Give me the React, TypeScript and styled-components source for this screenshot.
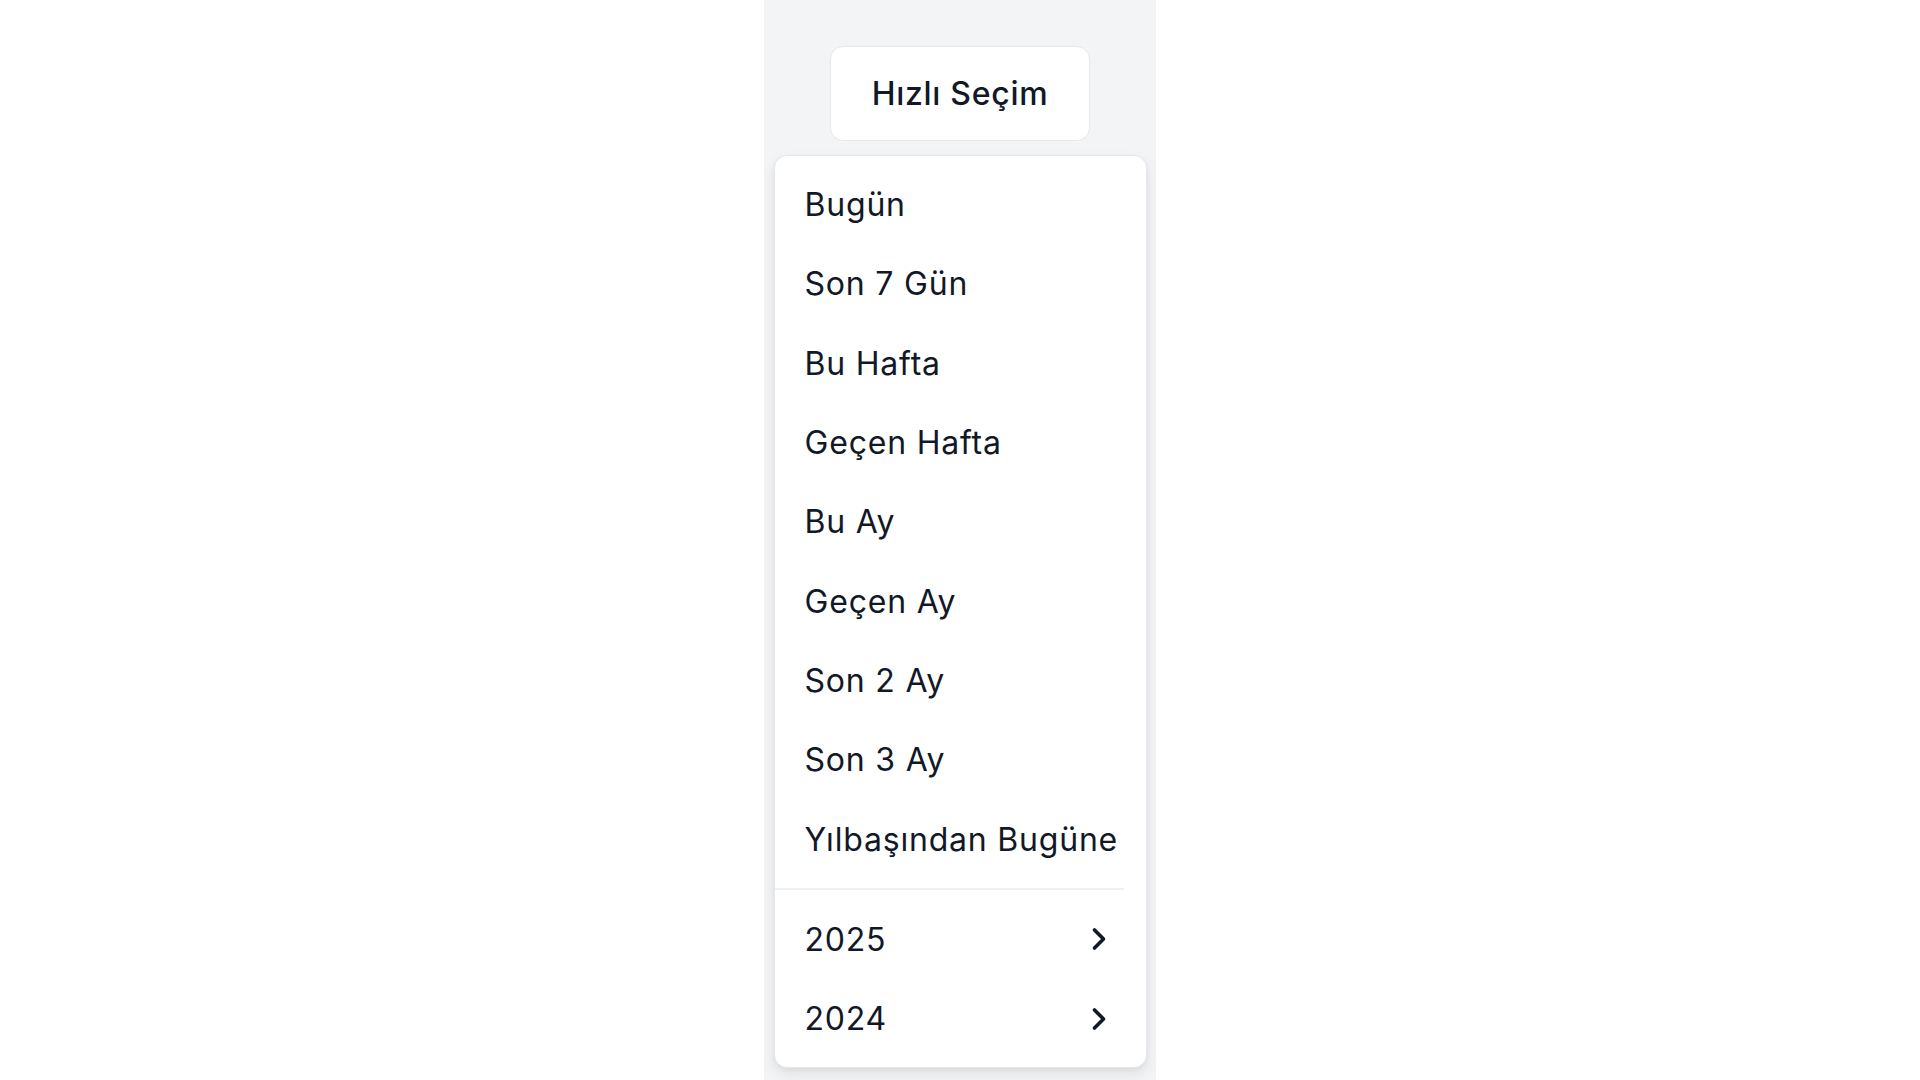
import React from 'react'
import styled, { createGlobalStyle } from 'styled-components';

const GlobalStyle = createGlobalStyle`
    html, body {
        margin: 0;
        padding: 0;
        background: #ffffff;
        font-family: Inter, "Noto Sans", "Liberation Sans", sans-serif;
        color: #111827;
    }
`;

const Page = styled.div`
    display: flex;
    justify-content: center;
    min-height: 1080px;
`;

const Panel = styled.div`
    width: 392px;
    background-color: #f3f4f6;
    display: flex;
    flex-direction: column;
    align-items: center;
    padding-top: 46px;
    box-sizing: border-box;
    height: 1080px;
`;

const Trigger = styled.button`
    width: 260px;
    height: 95px;
    background: #ffffff;
    border: 1.5px solid #e5e7eb;
    border-radius: 13px;
    font-family: inherit;
    font-size: 32px;
    letter-spacing: 0.7px;
    font-weight: 500;
    color: #111827;
    cursor: pointer;
    padding: 0;
`;

const Menu = styled.div`
    margin-top: 14px;
    width: 373px;
    box-sizing: border-box;
    background: #ffffff;
    border: 1.5px solid #e5e7eb;
    border-radius: 13px;
    box-shadow: 0 6px 14px rgba(0, 0, 0, 0.08), 0 2px 4px rgba(0, 0, 0, 0.04);
    padding: 9px 22px 9px 0;
    display: flex;
    flex-direction: column;
`;

const Item = styled.div`
    height: 79.3px;
    display: flex;
    align-items: center;
    justify-content: space-between;
    padding: 0 7px 0 30px;
    font-size: 32px;
    letter-spacing: 0.8px;
    font-weight: 400;
    color: #111827;
    cursor: default;
    white-space: nowrap;
`;

const Separator = styled.div`
    height: 1.5px;
    background: #eef0f3;
    margin: 9.5px 0 10px;
`;

const Chevron = () => (
    <svg width="36" height="36" viewBox="0 0 24 24" fill="none" stroke="#111827" strokeWidth="2.4" strokeLinecap="round" strokeLinejoin="round">
        <path d="m9 18 6-6-6-6" />
    </svg>
);

const presets = [
    'Bugün',
    'Son 7 Gün',
    'Bu Hafta',
    'Geçen Hafta',
    'Bu Ay',
    'Geçen Ay',
    'Son 2 Ay',
    'Son 3 Ay',
    'Yılbaşından Bugüne',
];

const years = ['2025', '2024'];

const App: React.FC = () => {
    return (
        <Page>
            <GlobalStyle />
            <Panel>
                <Trigger>Hızlı Seçim</Trigger>
                <Menu>
                    {presets.map((p) => (
                        <Item key={p}>{p}</Item>
                    ))}
                    <Separator />
                    {years.map((y) => (
                        <Item key={y}>
                            {y}
                            <Chevron />
                        </Item>
                    ))}
                </Menu>
            </Panel>
        </Page>
    );
};

export default App;
